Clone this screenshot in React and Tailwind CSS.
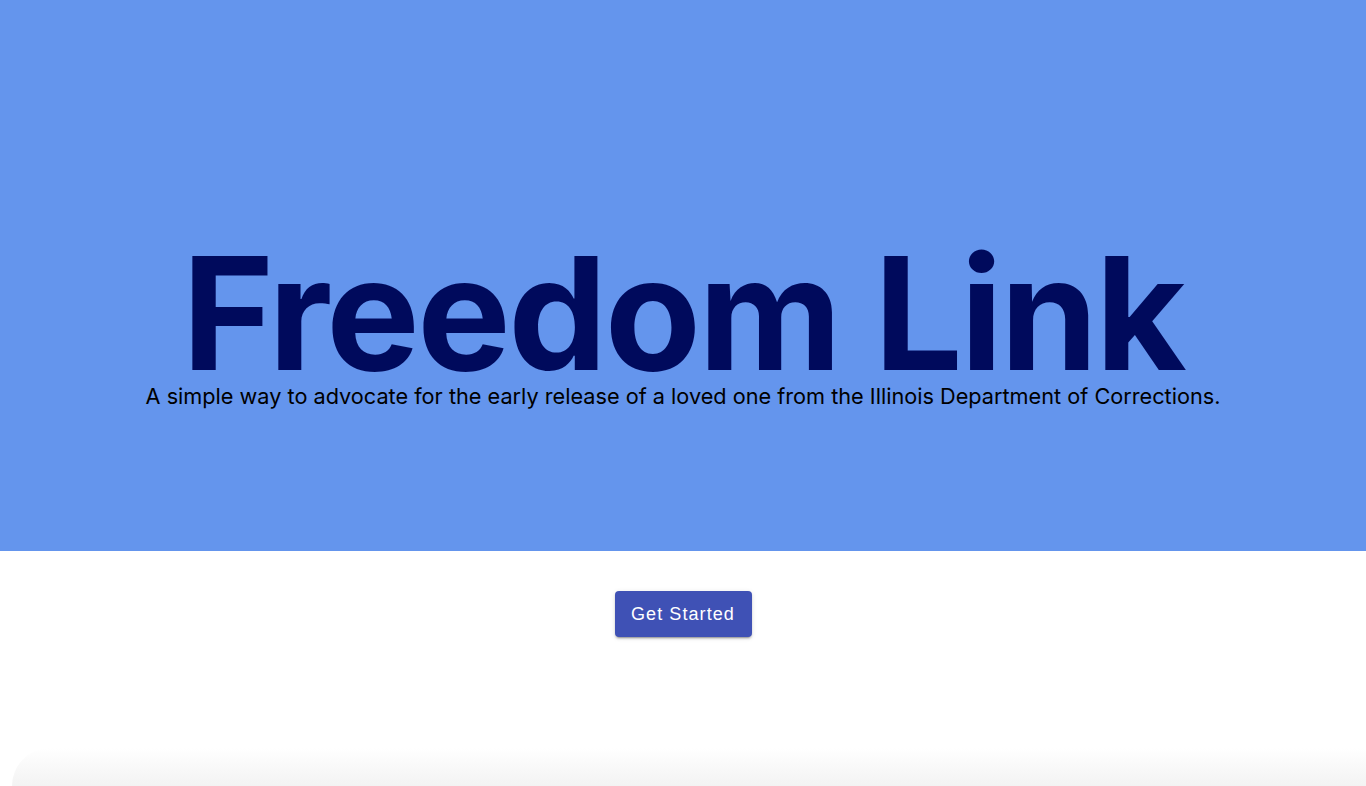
import React from "react";

export default function App() {
  return (
    <div className="w-[1366px] h-[786px] bg-white relative overflow-hidden" style={{ fontFamily: "Inter, 'Noto Sans', sans-serif" }}>
      <section className="h-[551px] bg-[#6495ed] flex flex-col items-center pt-[253px]">
        <h1 className="text-[157px] font-bold leading-[120px] tracking-[-0.016em] text-[#000a5c]">
          Freedom Link
        </h1>
        <p className="text-[21.7px] leading-none text-black mt-[13px]">
          A simple way to advocate for the early release of a loved one from the Illinois Department of Corrections.
        </p>
      </section>
      <div className="flex justify-center pt-[40px]">
        <button
          className="w-[137px] h-[46px] rounded-[4px] bg-[#3f51b5] text-white text-[18px] tracking-[0.06em] shadow-[0_3px_1px_-2px_rgba(0,0,0,0.2),0_2px_2px_0_rgba(0,0,0,0.14),0_1px_5px_0_rgba(0,0,0,0.12)]"
          style={{ fontFamily: "'Liberation Sans', Arial, sans-serif" }}
        >
          Get Started
        </button>
      </div>
      <div className="absolute left-[12px] right-0 bottom-0 h-[38px] rounded-tl-[48px] bg-gradient-to-b from-white to-[#f3f3f3]" />
    </div>
  );
}
